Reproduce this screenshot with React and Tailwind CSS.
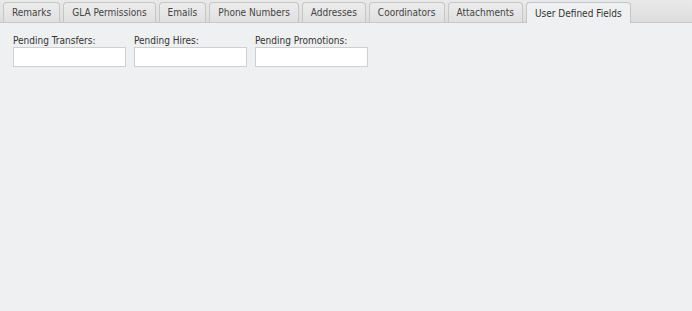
import clsx from 'clsx'

const tabs = [
  'Remarks',
  'GLA Permissions',
  'Emails',
  'Phone Numbers',
  'Addresses',
  'Coordinators',
  'Attachments',
  'User Defined Fields',
]

const fields = ['Pending Transfers:', 'Pending Hires:', 'Pending Promotions:']

export default function App() {
  const active = 'User Defined Fields'

  return (
    <div className="w-[692px] h-[311px] bg-[#eff0f1] text-[#333] text-[10px] font-['DejaVu_Sans_Condensed','Liberation_Sans',sans-serif] overflow-hidden">
      {/* tab strip */}
      <div className="flex items-end gap-[3px] h-[23px] pl-[3px] bg-gradient-to-b from-[#e9e9e9] to-[#dddddd] border-b border-[#c6c6c6]">
        {tabs.map((tab) => (
          <div
            key={tab}
            className={clsx(
              'flex items-center px-[8px] border border-b-0 border-[#c6c6c6] rounded-t-[4px] whitespace-nowrap',
              tab === active
                ? 'h-[21px] -mb-px bg-[#eff0f1]'
                : 'h-[20px] bg-gradient-to-b from-[#ececec] to-[#e0e0e0] text-[#444]'
            )}
          >
            {tab}
          </div>
        ))}
      </div>

      {/* fields */}
      <div className="flex gap-[8px] pt-[12px] pl-[13px]">
        {fields.map((label) => (
          <label key={label} className="flex flex-col w-[113px]">
            <span className="leading-[12px] whitespace-nowrap">{label}</span>
            <input
              type="text"
              className="h-[20px] w-[113px] bg-white border border-[#cfcfcf] outline-none px-1"
            />
          </label>
        ))}
      </div>
    </div>
  )
}
